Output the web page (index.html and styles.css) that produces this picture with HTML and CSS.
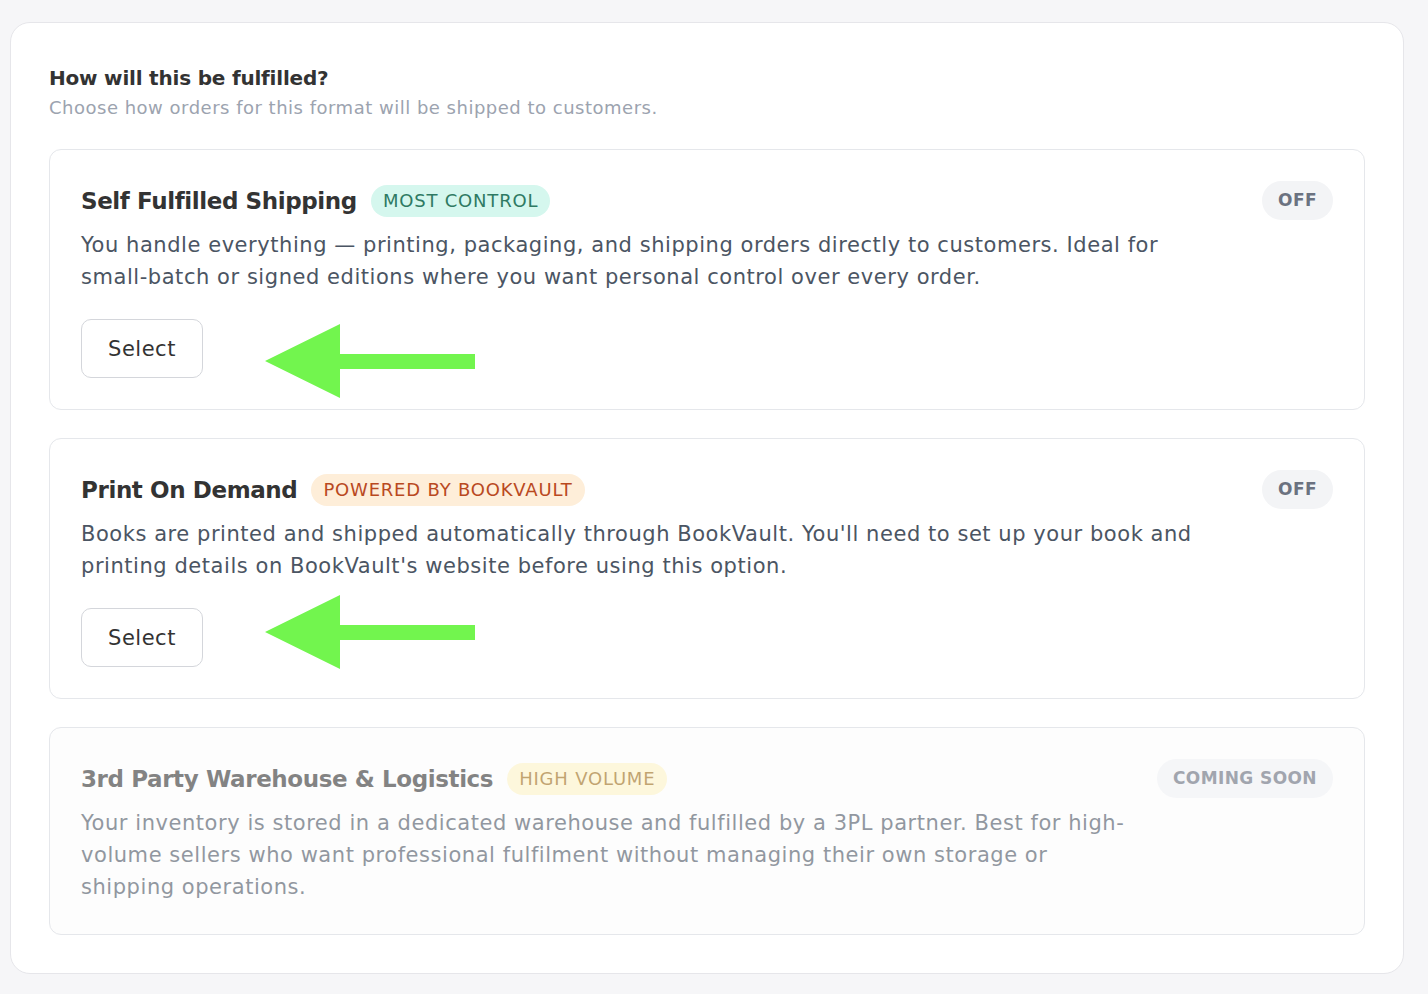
FILE: index.html
```html
<!DOCTYPE html>
<html lang="en">
<head>
  <meta charset="UTF-8">
  <meta name="viewport" content="width=device-width, initial-scale=1">
  <title>Fulfilment options</title>
  <link rel="stylesheet" href="styles.css">
</head>
<body>

<div class="panel">
  <header class="panel-head">
    <h2>How will this be fulfilled?</h2>
    <p>Choose how orders for this format will be shipped to customers.</p>
  </header>

  <div class="option">
    <div class="option-head">
      <div class="option-title">
        <h3>Self Fulfilled Shipping</h3>
        <span class="tag tag-green">MOST CONTROL</span>
      </div>
      <span class="status">OFF</span>
    </div>
    <p class="option-desc">You handle everything — printing, packaging, and shipping orders directly to customers. Ideal for small-batch or signed editions where you want personal control over every order.</p>
    <div class="option-actions">
      <button class="select-btn">Select</button>
      <svg class="arrow arrow-low" width="210" height="74" viewBox="0 0 210 74"><polygon points="0,37 75,0 75,30 210,30 210,45 75,45 75,74" fill="#72f54e"/></svg>
    </div>
  </div>

  <div class="option">
    <div class="option-head">
      <div class="option-title">
        <h3>Print On Demand</h3>
        <span class="tag tag-orange">POWERED BY BOOKVAULT</span>
      </div>
      <span class="status">OFF</span>
    </div>
    <p class="option-desc">Books are printed and shipped automatically through BookVault. You'll need to set up your book and printing details on BookVault's website before using this option.</p>
    <div class="option-actions">
      <button class="select-btn">Select</button>
      <svg class="arrow arrow-high" width="210" height="74" viewBox="0 0 210 74"><polygon points="0,37 75,0 75,30 210,30 210,45 75,45 75,74" fill="#72f54e"/></svg>
    </div>
  </div>

  <div class="option option-disabled">
    <div class="option-head">
      <div class="option-title">
        <h3>3rd Party Warehouse &amp; Logistics</h3>
        <span class="tag tag-yellow">HIGH VOLUME</span>
      </div>
      <span class="status status-soon">COMING SOON</span>
    </div>
    <p class="option-desc">Your inventory is stored in a dedicated warehouse and fulfilled by a 3PL partner. Best for high-volume sellers who want professional fulfilment without managing their own storage or shipping operations.</p>
  </div>
</div>

</body>
</html>
```

FILE: styles.css
```css
body {
  font-family: "DejaVu Sans", "Open Sans", sans-serif;
  background-color: #f6f6f8;
  margin: 0;
  padding: 22px 24px 20px 10px;
  color: #333333;
}
.panel {
  background-color: #ffffff;
  border: 1px solid #e6e6ea;
  border-radius: 20px;
  padding: 41px 38px 38px 38px;
}
.panel-head {
  margin-bottom: 28px;
}
.panel-head h2 {
  margin: 0;
  font-size: 20px;
  line-height: 28px;
  font-weight: 700;
  color: #333333;
  letter-spacing: -0.2px;
}
.panel-head p {
  margin: 3px 0 0 0;
  font-size: 18px;
  line-height: 26px;
  color: #9ca3af;
  letter-spacing: 0.5px;
}
.option {
  border: 1px solid #e5e7eb;
  border-radius: 12px;
  padding: 31px;
  margin-bottom: 28px;
}
.option:last-child {
  margin-bottom: 0;
}
.option-head {
  display: flex;
  justify-content: space-between;
  align-items: center;
  height: 39px;
}
.option-title {
  display: flex;
  align-items: center;
  gap: 14px;
}
.option-title h3 {
  margin: 0;
  font-size: 23px;
  font-weight: 600;
  color: #333333;
  letter-spacing: -0.4px;
}
.tag {
  font-size: 18px;
  font-weight: 500;
  letter-spacing: 0.8px;
  line-height: 32px;
  padding: 0 12px;
  border-radius: 16px;
}
.tag-green {
  background-color: #d5f7ee;
  color: #2f7a63;
}
.tag-orange {
  background-color: #feeed9;
  color: #b9491f;
}
.tag-yellow {
  background-color: #fef4c7;
  color: #9a6a14;
}
.status {
  font-size: 17px;
  font-weight: 700;
  line-height: 39px;
  padding: 0 16px;
  border-radius: 20px;
  background-color: #f3f4f6;
  color: #6b7280;
  letter-spacing: 0.4px;
}
.option-desc {
  margin: 9px 0 0 0;
  max-width: 1125px;
  font-size: 21px;
  line-height: 32px;
  color: #4b5563;
  letter-spacing: 0.55px;
}
.option-actions {
  position: relative;
  margin-top: 26px;
}
.select-btn {
  font-family: inherit;
  background-color: #ffffff;
  color: #333333;
  font-size: 21px;
  font-weight: 500;
  letter-spacing: 0.5px;
  width: 122px;
  height: 59px;
  border: 1px solid #d4d6db;
  border-radius: 10px;
  cursor: pointer;
}
.arrow {
  position: absolute;
  left: 184px;
}
.arrow-low {
  top: 5px;
}
.arrow-high {
  top: -13px;
}
.option-disabled {
  background-color: #fdfdfd;
}
.option-disabled h3,
.option-disabled .option-desc,
.option-disabled .tag {
  opacity: 0.6;
}
.option-disabled .option-desc {
  max-width: 1052px;
}
.status-soon {
  background-color: #f5f6f8;
  color: #a1a5ae;
}
```
